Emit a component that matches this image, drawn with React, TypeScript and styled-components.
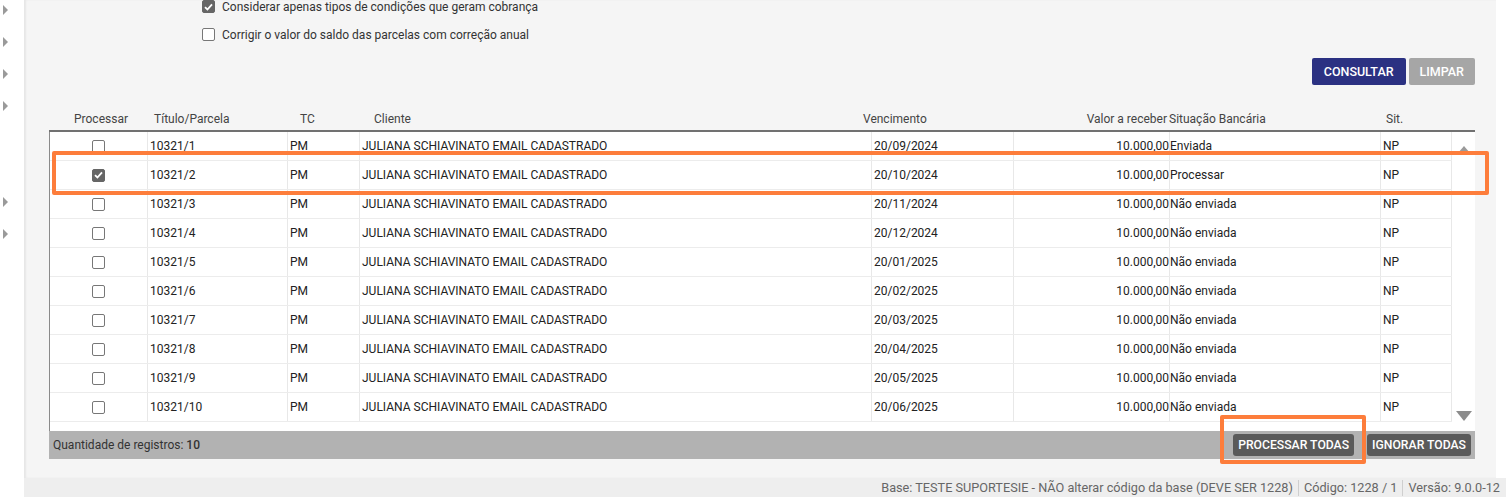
import styled, { createGlobalStyle } from "styled-components";

const GlobalStyle = createGlobalStyle`
	html, body { margin: 0; padding: 0; background: #fff; }
	body { font-family: Roboto, "Liberation Sans", sans-serif; font-size: 12px; color: #333; }
`;

type Row = { titulo: string; venc: string; situacao: string; checked?: boolean };

const rows: Row[] = [
	{ titulo: "10321/1", venc: "20/09/2024", situacao: "Enviada" },
	{ titulo: "10321/2", venc: "20/10/2024", situacao: "Processar", checked: true },
	{ titulo: "10321/3", venc: "20/11/2024", situacao: "Não enviada" },
	{ titulo: "10321/4", venc: "20/12/2024", situacao: "Não enviada" },
	{ titulo: "10321/5", venc: "20/01/2025", situacao: "Não enviada" },
	{ titulo: "10321/6", venc: "20/02/2025", situacao: "Não enviada" },
	{ titulo: "10321/7", venc: "20/03/2025", situacao: "Não enviada" },
	{ titulo: "10321/8", venc: "20/04/2025", situacao: "Não enviada" },
	{ titulo: "10321/9", venc: "20/05/2025", situacao: "Não enviada" },
	{ titulo: "10321/10", venc: "20/06/2025", situacao: "Não enviada" },
];

const Page = styled.div`
	display: flex;
	flex-direction: column;
	width: 1506px;
	height: 497px;
	overflow: hidden;
`;
const Top = styled.div`
	display: flex;
	height: 478px;
`;
const Sidebar = styled.div`
	width: 24px;
	flex-shrink: 0;
	background: #fff;
	display: flex;
	flex-direction: column;
	padding-top: 5px;
	box-sizing: border-box;
`;
const Arrow = styled.div<{ $gap?: number }>`
	width: 0;
	height: 0;
	margin-left: 3px;
	margin-top: ${p => p.$gap ?? 0}px;
	border-top: 5px solid transparent;
	border-bottom: 5px solid transparent;
	border-left: 5px solid #9a9a9a;
`;
const Main = styled.div`
	width: 1472px;
	background: #f5f5f5;
	box-shadow: inset 2px 0 2px rgba(0,0,0,0.06);
	padding: 0 21px 0 25px;
	box-sizing: border-box;
	position: relative;
`;
const RightGap = styled.div`
	flex: 1;
	background: #fff;
`;
const Options = styled.div`
	display: flex;
	flex-direction: column;
	gap: 15px;
	margin-left: 153px;
`;
const Option = styled.label`
	display: flex;
	align-items: center;
	gap: 7px;
	height: 13px;
	font-size: 12px;
	color: #333;
`;
const Check = styled.span<{ $checked?: boolean }>`
	width: 13px;
	height: 13px;
	box-sizing: border-box;
	border-radius: 2px;
	border: 1px solid ${p => p.$checked ? "#666" : "#777"};
	background: ${p => p.$checked ? "#666" : "#fff"};
	display: inline-flex;
	align-items: center;
	justify-content: center;
	flex-shrink: 0;
`;
const Actions = styled.div`
	display: flex;
	justify-content: flex-end;
	gap: 3px;
	margin-top: 17px;
`;
const Button = styled.button<{ $variant: "primary" | "muted" }>`
	height: 27px;
	border: none;
	border-radius: 2px;
	padding: 0 ${p => p.$variant === "primary" ? 12 : 11}px;
	color: #fff;
	font-family: Roboto, "Liberation Sans", sans-serif;
	font-size: 12.5px;
	font-weight: 500;
	background: ${p => p.$variant === "primary" ? "#2b3182" : "#a6a6a6"};
`;
const HeaderRow = styled.div`
	display: grid;
	grid-template-columns: 104px 135px 72px 503px 152px 152px 217px 68px;
	height: 22px;
	margin-top: 23px;
	align-items: center;
	color: #444;
	font-size: 12px;
	border-bottom: 2px solid #717171;
	width: 1426px;
`;
const HeadCell = styled.div<{ $align?: string; $pad?: number }>`
	text-align: ${p => p.$align ?? "left"};
	padding-left: ${p => p.$pad ?? 0}px;
	white-space: nowrap;
`;
const Body = styled.div`
	display: flex;
	height: 299px;
	background: #fff;
	border-left: 1px solid #8a8a8a;
	width: 1426px;
	box-sizing: border-box;
`;
const Rows = styled.div`
	display: flex;
	flex-direction: column;
`;
const DataRow = styled.div`
	display: grid;
	grid-template-columns: 98px 140px 72px 512px 142px 156px 211px 71px;
	height: 29px;
	border-bottom: 1px solid #ececec;
	box-sizing: border-box;
	align-items: stretch;
	color: #222;
	font-size: 12px;
`;
const Cell = styled.div<{ $align?: string; $pad?: number }>`
	display: flex;
	align-items: center;
	justify-content: ${p => p.$align === "right" ? "flex-end" : p.$align === "center" ? "center" : "flex-start"};
	padding-left: ${p => p.$align ? 0 : p.$pad ?? 2}px;
	border-right: 1px solid #e8e8e8;
	white-space: nowrap;
	overflow: hidden;
`;
const Scroll = styled.div`
	width: 23px;
	display: flex;
	flex-direction: column;
	justify-content: space-between;
	align-items: center;
	padding: 14px 0 10px;
	box-sizing: border-box;
`;
const Tri = styled.div<{ $down?: boolean }>`
	width: 0;
	height: 0;
	border-left: ${p => p.$down ? 8 : 6}px solid transparent;
	border-right: ${p => p.$down ? 8 : 6}px solid transparent;
	${p => p.$down ? "border-top: 10px solid #8c8c8c;" : "border-bottom: 7px solid #9a9a9a;"}
`;
const FooterBar = styled.div`
	display: flex;
	align-items: center;
	justify-content: space-between;
	width: 1426px;
	height: 28px;
	background: #b2b2b2;
	padding: 0 4px;
	box-sizing: border-box;
	font-size: 12px;
	color: #333;
`;
const FooterButtons = styled.div`
	display: flex;
	gap: 13px;
`;
const DarkButton = styled.button`
	height: 22px;
	border: none;
	border-radius: 3px;
	background: #5a5a5a;
	color: #fff;
	padding: 0 5px;
	font-family: Roboto, "Liberation Sans", sans-serif;
	font-size: 12.2px;
	font-weight: 500;
`;
const Mark = styled.div`
	position: absolute;
	border: 4px solid #fd7d3b;
	border-radius: 2px;
	box-sizing: border-box;
	pointer-events: none;
`;
const Status = styled.div`
	height: 19px;
	margin-left: 24px;
	background: #eeeeee;
	display: flex;
	justify-content: flex-end;
	align-items: center;
	padding-right: 6px;
	font-size: 12.7px;
	color: #666;
`;
const StatusItem = styled.span`
	padding: 0 5px;
	border-left: 1px solid #cfcfcf;
	line-height: 16px;
	&:first-child { border-left: none; }
	&:last-child { padding-right: 0; }
`;
const Count = styled.b`
	font-weight: 500;
`;

const Tick = () => (
	<svg width="9" height="8" viewBox="0 0 9 8">
		<path d="M1 4.2 L3.4 6.5 L8 1.3" fill="none" stroke="#fff" strokeWidth="1.8" />
	</svg>
);

export default function App() {
	return (
		<Page>
			<GlobalStyle />
			<Top>
				<Sidebar>
					<Arrow />
					<Arrow $gap={22} />
					<Arrow $gap={22} />
					<Arrow $gap={22} />
					<Arrow $gap={86} />
					<Arrow $gap={22} />
				</Sidebar>
				<Main>
					<Options>
						<Option><Check $checked><Tick /></Check>Considerar apenas tipos de condições que geram cobrança</Option>
						<Option><Check />Corrigir o valor do saldo das parcelas com correção anual</Option>
					</Options>
					<Actions>
						<Button $variant="primary">CONSULTAR</Button>
						<Button $variant="muted">LIMPAR</Button>
					</Actions>
					<HeaderRow>
						<HeadCell $align="center">Processar</HeadCell>
						<HeadCell $pad={1}>Título/Parcela</HeadCell>
						<HeadCell $pad={12}>TC</HeadCell>
						<HeadCell $pad={14}>Cliente</HeadCell>
						<HeadCell>Vencimento</HeadCell>
						<HeadCell $align="right">Valor a receber</HeadCell>
						<HeadCell $pad={2}>Situação Bancária</HeadCell>
						<HeadCell $pad={2}>Sit.</HeadCell>
					</HeaderRow>
					<Body>
						<Rows>
							{rows.map(r => (
								<DataRow key={r.titulo}>
									<Cell $align="center"><Check $checked={r.checked}>{r.checked && <Tick />}</Check></Cell>
									<Cell>{r.titulo}</Cell>
									<Cell>PM</Cell>
									<Cell>JULIANA SCHIAVINATO EMAIL CADASTRADO</Cell>
									<Cell>{r.venc}</Cell>
									<Cell $align="right">10.000,00</Cell>
									<Cell $pad={0}>{r.situacao}</Cell>
									<Cell>NP</Cell>
								</DataRow>
							))}
						</Rows>
						<Scroll>
							<Tri />
							<Tri $down />
						</Scroll>
					</Body>
					<FooterBar>
						<span>Quantidade de registros: <Count>10</Count></span>
						<FooterButtons>
							<DarkButton>PROCESSAR TODAS</DarkButton>
							<DarkButton>IGNORAR TODAS</DarkButton>
						</FooterButtons>
					</FooterBar>
					<Mark style={{ left: 28, top: 151, width: 1437, height: 44 }} />
					<Mark style={{ left: 1196, top: 415, width: 146, height: 49 }} />
				</Main>
				<RightGap />
			</Top>
			<Status>
				<StatusItem>Base: TESTE SUPORTESIE - NÃO alterar código da base (DEVE SER 1228)</StatusItem>
				<StatusItem>Código: 1228 / 1</StatusItem>
				<StatusItem>Versão: 9.0.0-12</StatusItem>
			</Status>
		</Page>
	);
}
